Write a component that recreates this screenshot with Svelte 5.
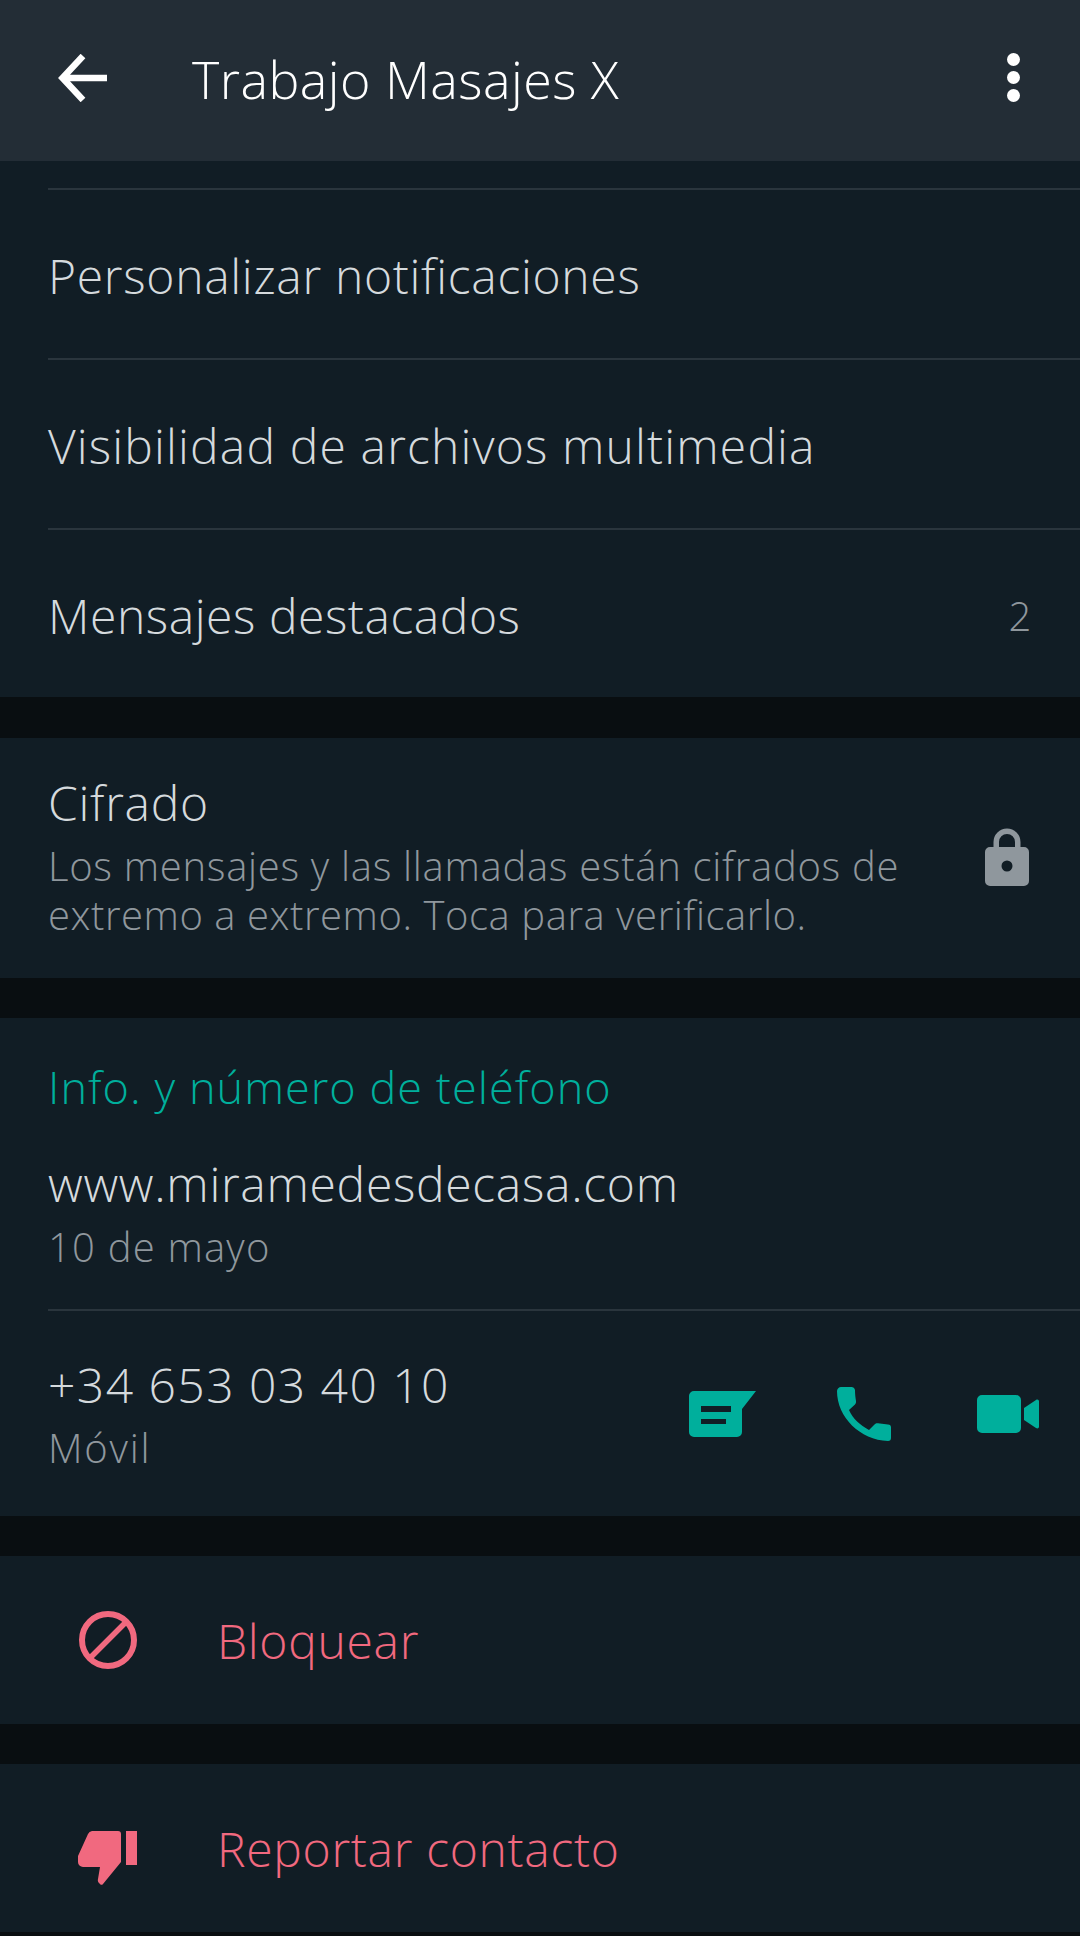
<script lang="ts">
  const rows = [
    { label: "Personalizar notificaciones", cls: "" },
    { label: "Visibilidad de archivos multimedia", cls: "wide" },
    { label: "Mensajes destacados", cls: "tight", count: "2" }
  ];
</script>

<div class="screen">
  <header class="toolbar">
    <svg class="back" width="50" height="48" viewBox="0 0 50 48" aria-hidden="true">
      <path d="M25 2 4.500 24 25 46M5 24H49" fill="none" stroke="#fff" stroke-width="6.500" />
    </svg>
    <h1>Trabajo Masajes X</h1>
    <div class="more" aria-hidden="true"><i></i><i></i><i></i></div>
  </header>

  <section class="list">
    {#each rows as row}
      <div class="row">
        <span class={row.cls}>{row.label}</span>
        {#if row.count}<span class="count">{row.count}</span>{/if}
      </div>
    {/each}
  </section>

  <section class="cifrado">
    <div class="cifrado-text">
      <div class="title">Cifrado</div>
      <div class="desc">Los mensajes y las llamadas están cifrados de<br /><span class="desc-end">extremo a extremo. Toca para verificarlo.</span></div>
    </div>
    <svg class="lock" width="44" height="58" viewBox="0 0 44 58" aria-hidden="true">
      <path fill="#8f979d" fill-rule="evenodd" d="M8.500 19v-5a13.500 13.500 0 0 1 27 0v5h3.500a5 5 0 0 1 5 5v29a5 5 0 0 1-5 5H5a5 5 0 0 1-5-5V24a5 5 0 0 1 5-5zm5.500 0h16v-5a8 8 0 0 0-16 0zM22 32.500a5.500 5.500 0 1 0 0 11 5.500 5.500 0 0 0 0-11z" />
    </svg>
  </section>

  <section class="info">
    <div class="info-head">Info. y número de teléfono</div>
    <div class="about">
      <div class="primary">www.miramedesdecasa.com</div>
      <div class="secondary">10 de mayo</div>
    </div>
    <div class="phone">
      <div class="phone-text">
        <div class="primary number">+34 653 03 40 10</div>
        <div class="secondary mobile">Móvil</div>
      </div>
      <div class="actions">
        <svg width="68" height="46" viewBox="0 0 68 46" aria-hidden="true">
          <path fill="#00af9c" fill-rule="evenodd" d="M6 0h62L54 18v23a5 5 0 0 1-5 5H6a5 5 0 0 1-5-5V5a5 5 0 0 1 5-5zm7 15v6h30v-6zm0 13v5h25v-5z" />
        </svg>
        <svg class="call" width="54" height="54" viewBox="0 0 54 54" aria-hidden="true">
          <path fill="#00af9c" d="M4 0h10a4 4 0 0 1 4 3c0 4 .5 8 1 11 .2 1.500-.2 2.500-1 3.500L12 23c4 9 11 15 20 20l5.500-5.500c1-1 2-1.500 3.500-1.300l10 1.300a3 3 0 0 1 3 3V51a3 3 0 0 1-3 3C23 53 0 30 0 4c0-2 2-4 4-4z" />
        </svg>
        <svg class="video" width="62" height="38" viewBox="0 0 62 38" aria-hidden="true">
          <path fill="#00af9c" d="M5 0h34a5 5 0 0 1 5 5v28a5 5 0 0 1-5 5H5a5 5 0 0 1-5-5V5a5 5 0 0 1 5-5zM47 13 59 5c1.500-1 3-.3 3 1.500v25c0 1.800-1.500 2.500-3 1.500L47 25z" />
        </svg>
      </div>
    </div>
  </section>

  <section class="danger">
    <svg width="60" height="60" viewBox="0 0 60 60" aria-hidden="true">
      <circle cx="30" cy="30" r="26" fill="none" stroke="#f1697f" stroke-width="6" />
      <path d="M11 49 49 11" stroke="#f1697f" stroke-width="5.500" />
    </svg>
    <span>Bloquear</span>
  </section>

  <section class="danger">
    <svg class="thumb" width="60" height="54" viewBox="0 0 60 54" aria-hidden="true">
      <path fill="#f1697f" d="M14 0H40a3 3 0 0 1 3 3V31L25 53a2 2 0 0 1-3 0c-2-1.500-2.500-3-2-5L22 36H5a5 5 0 0 1-5-5V25L10 3a5 5 0 0 1 4-3zM48 0h11v34H48z" />
    </svg>
    <span>Reportar contacto</span>
  </section>
</div>

<style>
  :global(body) {
    margin: 0;
    background: #090e11;
  }

  .screen {
    width: 1080px;
    height: 1936px;
    overflow: hidden;
    font-family: "Open Sans", "Noto Sans", sans-serif;
    font-weight: 300;
    color: #d5dadd;
    letter-spacing: 0.7px;
  }

  .toolbar {
    height: 161px;
    display: flex;
    align-items: center;
    background: #232d36;
    padding: 0 0 6px 58px;
    box-sizing: border-box;
    color: #fff;
  }

  .back {
    flex-shrink: 0;
  }

  h1 {
    margin: 0 0 0 84px;
    padding-top: 2px;
    font-size: 52px;
    font-weight: 300;
    letter-spacing: 0.45px;
    flex: 1;
  }

  .more {
    display: flex;
    flex-direction: column;
    gap: 5px;
    margin-right: 60px;
  }

  .more i {
    width: 13px;
    height: 13px;
    border-radius: 50%;
    background: #fff;
  }

  .list {
    background: #111d25;
    padding-top: 27px;
  }

  .row {
    height: 165px;
    padding-top: 3px;
    margin-left: 48px;
    padding-right: 48px;
    border-top: 2px solid #2a353d;
    display: flex;
    align-items: center;
    justify-content: space-between;
    font-size: 48px;
  }

  .row:last-child {
    height: 164px;
  }

  .wide {
    letter-spacing: 1.15px;
  }

  .tight {
    letter-spacing: 0.55px;
  }

  .count {
    font-size: 40px;
    color: #8f979d;
  }

  .cifrado {
    margin-top: 41px;
    height: 240px;
    background: #111d25;
    display: flex;
    align-items: center;
    justify-content: space-between;
    padding: 0 51px 0 48px;
    box-sizing: border-box;
  }

  .cifrado-text {
    margin-bottom: 4px;
  }

  .title {
    font-size: 48px;
    line-height: 60px;
    margin-bottom: 8px;
  }

  .desc {
    font-size: 40px;
    line-height: 49px;
    color: #8f979d;
  }

  .desc-end {
    letter-spacing: 0.55px;
  }

  .lock {
    margin-bottom: 3px;
  }

  .info {
    margin-top: 40px;
    height: 498px;
    background: #111d25;
    box-sizing: border-box;
    padding-top: 40px;
  }

  .info-head {
    margin-left: 48px;
    font-size: 45px;
    line-height: 58px;
    letter-spacing: 1.05px;
    color: #00af9c;
  }

  .about {
    margin-left: 48px;
    height: 193px;
    padding-top: 36px;
    box-sizing: border-box;
  }

  .primary {
    font-size: 48px;
    line-height: 64px;
  }

  .number {
    letter-spacing: 1.45px;
  }

  .secondary {
    font-size: 40px;
    line-height: 52px;
    margin-top: 5px;
    letter-spacing: 1.2px;
    color: #8f979d;
  }

  .mobile {
    letter-spacing: 1.8px;
  }

  .phone {
    margin-left: 48px;
    border-top: 2px solid #2a353d;
    display: flex;
    justify-content: space-between;
    align-items: center;
    height: 205px;
    padding-right: 41px;
  }

  .actions {
    display: flex;
    align-items: center;
    gap: 81px;
  }

  .video {
    margin-left: 5px;
  }

  .danger {
    margin-top: 40px;
    height: 168px;
    background: #111d25;
    display: flex;
    align-items: center;
    padding-left: 78px;
    gap: 79px;
    font-size: 48px;
    color: #f1697f;
  }

  .thumb {
    margin-top: 19px;
  }
</style>
